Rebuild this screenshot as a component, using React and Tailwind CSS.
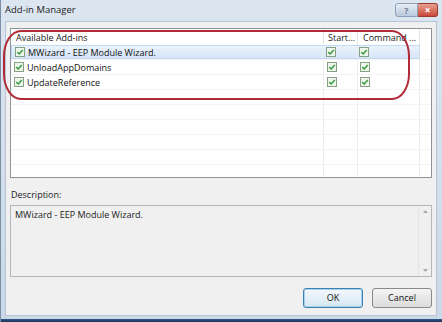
import React from "react";

function Check() {
  return (
    <svg width="10" height="10" viewBox="0 0 10 10" className="block shrink-0">
      <rect x="0.5" y="0.5" width="9" height="9" fill="#eef6ec" stroke="#86a083" />
      <path d="M2.3 5.1 L4.2 7 L7.8 2.9" fill="none" stroke="#3a9a42" strokeWidth="1.5" />
    </svg>
  );
}

const rows = [
  { name: "MWizard - EEP Module Wizard.", sel: true },
  { name: "UnloadAppDomains" },
  { name: "UpdateReference" },
];

function Row({ r }) {
  return (
    <div className="flex h-[15px] shrink-0 border-b border-[#f3f3f3]">
      <div
        className={
          "flex w-[409px] h-full " +
          (r && r.sel
            ? "bg-gradient-to-b from-[#ebf3fc] to-[#d5e5f8] border border-[#c2d9f3]"
            : "")
        }
      >
        <div className="w-[313px] h-full flex items-center pl-[3px] gap-[3px] border-r border-[#ededed]">
          {r && <Check />}
          {r && <span className="text-[9px] leading-none text-[#111]">{r.name}</span>}
        </div>
        <div className="w-[34px] h-full flex items-center pl-[3px] border-r border-[#ededed]">
          {r && <Check />}
        </div>
        <div className="w-[62px] h-full flex items-center pl-[2px] border-r border-[#ededed]">
          {r && <Check />}
        </div>
      </div>
      <div className="flex-1" />
    </div>
  );
}

export default function App() {
  const font = { fontFamily: "'Open Sans', 'Liberation Sans', sans-serif" };
  return (
    <div
      className="relative w-[442px] h-[322px] overflow-hidden bg-gradient-to-b from-[#dce6f1] to-[#cad8e7] flex flex-col border-l border-[#7b8ea3]"
      style={font}
    >
      {/* title bar */}
      <div className="h-[21px] flex items-start shrink-0">
        <span className="pl-[4px] pt-[5px] text-[9.5px] leading-none text-[#1b1b1b]">Add-in Manager</span>
        <div className="ml-auto mr-[4px] mt-[3px] flex">
          <div className="w-[23px] h-[14px] rounded-l-[3px] border border-[#8ca0b8] bg-gradient-to-b from-[#e8eef6] to-[#b9c9dc] flex items-center justify-center text-[9px] font-bold text-[#6c7f96] leading-none">
            ?
          </div>
          <div className="w-[20px] h-[14px] rounded-r-[3px] border border-l-0 border-[#9a3a30] bg-gradient-to-b from-[#e7a08f] to-[#c9473a] flex items-center justify-center text-[10px] font-bold text-white leading-none">
            ×
          </div>
        </div>
      </div>

      {/* client area */}
      <div className="ml-[4px] mr-[5px] h-[295px] shrink-0 bg-[#f0f0f0] border border-[#b5c4d4] flex flex-col px-[4px] pt-[6px]">
        {/* list */}
        <div className="h-[150px] shrink-0 border border-[#8e949c] bg-white flex flex-col overflow-hidden">
          <div className="flex h-[16px] shrink-0 text-[9px] leading-none text-[#222]">
            <div className="w-[313px] h-full flex items-center pl-[5px] border-r border-[#e6e6e6]">Available Add-ins</div>
            <div className="w-[34px] h-full flex items-center pl-[4px] border-r border-[#e6e6e6] whitespace-nowrap">Start...</div>
            <div className="w-[62px] h-full flex items-center pl-[5px] border-r border-[#e6e6e6] whitespace-nowrap">Command ...</div>
            <div className="flex-1" />
          </div>
          {rows.map((r, i) => (
            <Row key={i} r={r} />
          ))}
          {[0, 1, 2, 3, 4, 5].map((i) => (
            <Row key={"e" + i} />
          ))}
        </div>

        <div className="mt-[12px] pl-[1px] text-[9px] leading-none text-[#1a1a1a]">Description:</div>

        <div className="mt-[6px] h-[72px] shrink-0 border border-[#b3b6bb] bg-[#f0f0f0] flex">
          <div className="flex-1 pl-[4px] pt-[4px] text-[9px] leading-none text-[#222]">MWizard - EEP Module Wizard.</div>
          <div className="w-[13px] border-l border-[#e3e3e3] flex flex-col items-center justify-between py-[4px]">
            <svg width="5" height="3" viewBox="0 0 5 3"><path d="M0 3 L2.5 0 L5 3 Z" fill="#a8a8a8" /></svg>
            <svg width="5" height="3" viewBox="0 0 5 3"><path d="M0 0 L2.5 3 L5 0 Z" fill="#a8a8a8" /></svg>
          </div>
        </div>

        <div className="mt-[11px] flex justify-end gap-[9px]">
          <div className="w-[60px] h-[20px] rounded-[3px] border border-[#3c7fb1] bg-gradient-to-b from-[#f4f9fd] to-[#d6e6f2] shadow-[inset_0_0_0_1px_#a6d0ee] flex items-center justify-center text-[9px] text-[#111]">
            OK
          </div>
          <div className="w-[60px] h-[20px] rounded-[3px] border border-[#8a8a8a] bg-gradient-to-b from-[#f4f4f4] to-[#dcdcdc] flex items-center justify-center text-[9px] text-[#111]">
            Cancel
          </div>
        </div>
      </div>

      <div className="flex-1" />
      <div className="h-[3px] shrink-0 bg-gradient-to-b from-[#2f5a8a] to-[#183458]" />

      {/* red annotation */}
      <div className="absolute left-[2px] top-[30px] w-[407px] h-[70px] border-2 border-[#b02b37] rounded-[18px/26px] pointer-events-none" />
    </div>
  );
}
